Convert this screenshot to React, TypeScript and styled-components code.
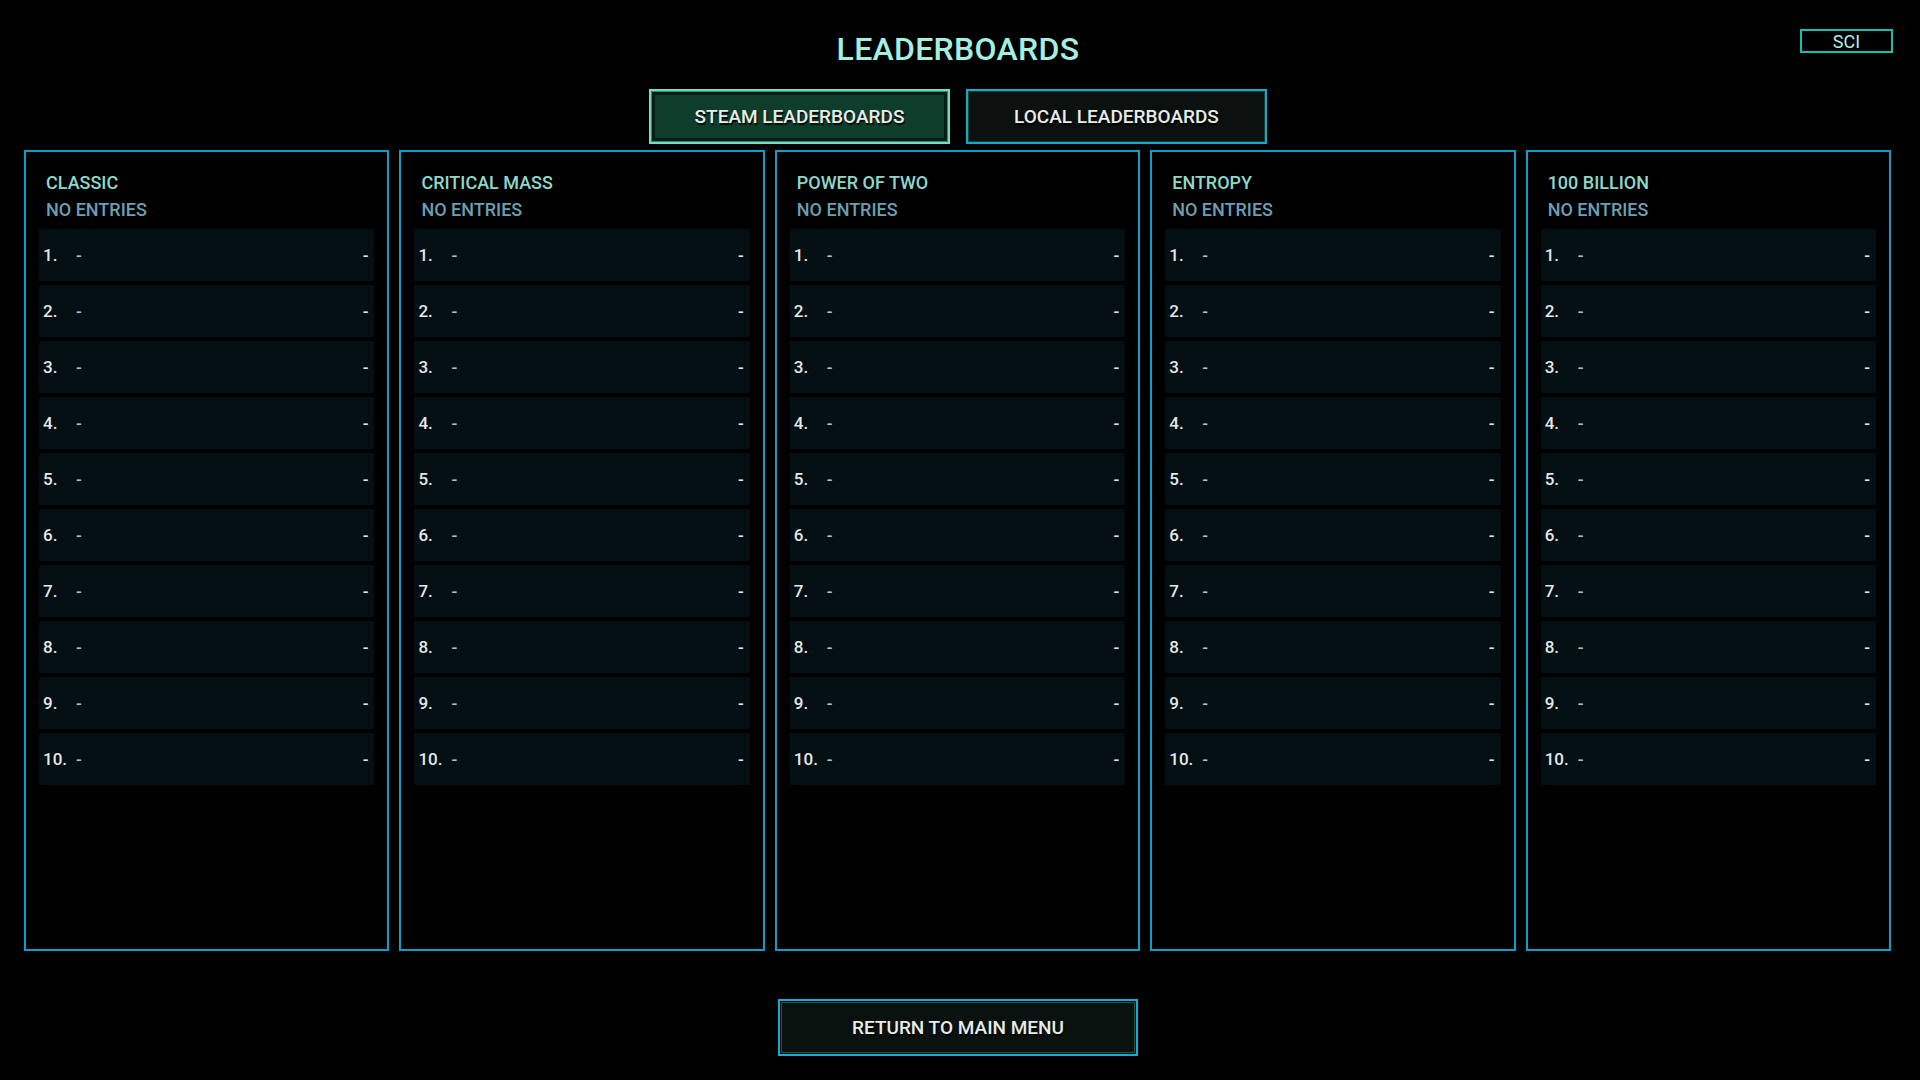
import React from 'react';
import styled, { createGlobalStyle } from 'styled-components';

const GlobalStyle = createGlobalStyle`
  html, body {
    margin: 0;
    padding: 0;
    background: #000;
  }
  body {
    font-family: Roboto, "Noto Sans", "Liberation Sans", sans-serif;
    color: #e4e8e8;
  }
`;

const Page = styled.div`
  position: relative;
  width: 1920px;
  height: 1080px;
  display: flex;
  flex-direction: column;
  align-items: center;
  background: #000;
  box-sizing: border-box;
  padding: 33px 4px 0 0;
`;

const Title = styled.h1`
  margin: 0;
  font-size: 32px;
  line-height: 1;
  font-weight: 500;
  color: #a4efe0;
  letter-spacing: 0.3px;
`;

const ModeBadge = styled.div`
  position: absolute;
  top: 29px;
  right: 27px;
  width: 93px;
  height: 24px;
  box-sizing: border-box;
  border: 2px solid #15bfb2;
  display: flex;
  align-items: center;
  justify-content: center;
  font-size: 18px;
  font-weight: 400;
  color: #b6eee2;
`;

const Tabs = styled.div`
  display: flex;
  gap: 16px;
  margin-top: 24px;
`;

const TabButton = styled.button<{ $active?: boolean }>`
  width: 301px;
  height: 55px;
  box-sizing: border-box;
  padding: 0;
  font-family: inherit;
  font-size: 19px;
  font-weight: 500;
  color: #e8ece8;
  text-shadow: 1px 2px 1px rgba(0, 0, 0, 0.85);
  cursor: pointer;
  background: ${p => (p.$active ? '#0e3d2b' : '#0a110f')};
  border: 2px solid ${p => (p.$active ? '#74dcc0' : '#12a8d0')};
  box-shadow: ${p =>
    p.$active
      ? 'inset 0 0 0 1px #1f8f74, inset 0 0 0 4px #0a1c15'
      : 'inset 0 0 0 1px #17412e'};
`;

const Boards = styled.div`
  display: flex;
  gap: 10px;
  width: 100%;
  box-sizing: border-box;
  padding: 0 25px 0 24px;
  margin-top: 6px;
`;

const Board = styled.section`
  flex: 1;
  height: 801px;
  box-sizing: border-box;
  border: 2px solid #0b9ec6;
  padding: 22px 13px 0 13px;
  display: flex;
  flex-direction: column;
`;

const BoardTitle = styled.div`
  font-size: 18px;
  line-height: 18px;
  font-weight: 500;
  color: #8fd8c8;
  padding-left: 7px;
`;

const BoardStatus = styled.div`
  margin-top: 9px;
  font-size: 18px;
  line-height: 18px;
  font-weight: 500;
  color: #6c9fb2;
  padding-left: 7px;
`;

const Entries = styled.div`
  margin-top: 10px;
  display: flex;
  flex-direction: column;
  gap: 4px;
`;

const Entry = styled.div`
  height: 52px;
  background: #030f13;
  display: flex;
  align-items: center;
  padding: 0 6px 0 4px;
  font-size: 17px;
  font-weight: 500;
`;

const Rank = styled.span`
  width: 33px;
  color: #e4e8e8;
`;

const Player = styled.span`
  flex: 1;
  color: #8ed3c3;
`;

const Score = styled.span`
  color: #e0e4e4;
`;

const ReturnButton = styled.button`
  margin-top: 48px;
  width: 360px;
  height: 57px;
  box-sizing: border-box;
  padding: 0;
  font-family: inherit;
  font-size: 19px;
  font-weight: 500;
  color: #e8ece8;
  text-shadow: 1px 2px 1px rgba(0, 0, 0, 0.85);
  background: #0a120f;
  border: 2px solid #12acd6;
  box-shadow: inset 0 0 0 1px #000, inset 0 0 0 2px #1b5a48;
  cursor: pointer;
`;

const boards = ['CLASSIC', 'CRITICAL MASS', 'POWER OF TWO', 'ENTROPY', '100 BILLION'];

export default function App() {
  return (
    <>
      <GlobalStyle />
      <Page>
        <Title>LEADERBOARDS</Title>
        <ModeBadge>SCI</ModeBadge>
        <Tabs>
          <TabButton $active>STEAM LEADERBOARDS</TabButton>
          <TabButton>LOCAL LEADERBOARDS</TabButton>
        </Tabs>
        <Boards>
          {boards.map(name => (
            <Board key={name}>
              <BoardTitle>{name}</BoardTitle>
              <BoardStatus>NO ENTRIES</BoardStatus>
              <Entries>
                {Array.from({ length: 10 }, (_, i) => (
                  <Entry key={i}>
                    <Rank>{i + 1}.</Rank>
                    <Player>-</Player>
                    <Score>-</Score>
                  </Entry>
                ))}
              </Entries>
            </Board>
          ))}
        </Boards>
        <ReturnButton>RETURN TO MAIN MENU</ReturnButton>
      </Page>
    </>
  );
}
